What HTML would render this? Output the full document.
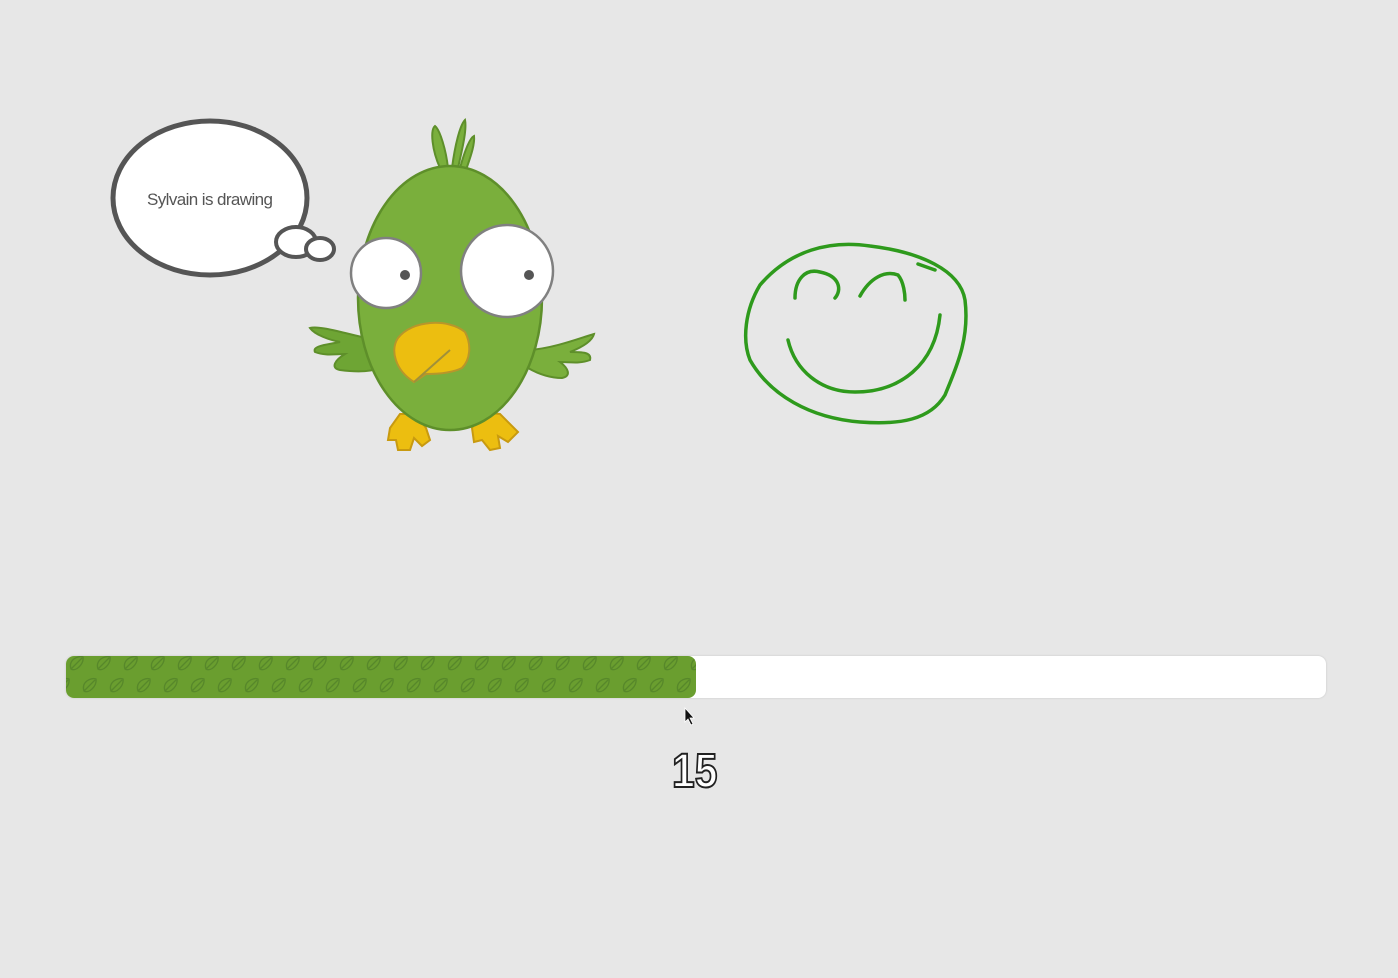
<!DOCTYPE html>
<html><head><style>
body{margin:0;width:1398px;height:978px;background:#e7e7e7;overflow:hidden;position:relative;font-family:"Liberation Sans",sans-serif}
.bar{position:absolute;left:66px;top:656px;width:1260px;height:42px;background:#fff;border-radius:8px;box-shadow:0 0 2px rgba(0,0,0,.15)}
.fill{position:absolute;left:66px;top:656px;width:630px;height:42px;border-radius:8px;background:#6a9e2f;overflow:hidden}
.num{position:absolute;left:672px;top:744px;font-size:48px;font-weight:bold;color:#fff;-webkit-text-stroke:2px #222;letter-spacing:0px;font-family:"Liberation Sans",sans-serif;transform:scaleX(0.85);transform-origin:left}
</style></head><body>
<svg width="1398" height="978" style="position:absolute;left:0;top:0">
<defs>
<pattern id="lf" x="0" y="0" width="54" height="42" patternUnits="userSpaceOnUse">
<g fill="none" stroke="#57882a" stroke-width="1.4">
<path d="M5 13 C2 4 12 -1 17 1 C18 8 10 16 5 13Z M5 13 L16 2"/>
<path d="M32 13 C29 4 39 -1 44 1 C45 8 37 16 32 13Z M32 13 L43 2"/>
<path d="M18 35 C15 26 25 21 30 23 C31 30 23 38 18 35Z M18 35 L29 24"/>
<path d="M45 35 C42 26 52 21 57 23 C58 30 50 38 45 35Z M45 35 L56 24"/>
<path d="M-9 35 C-12 26 -2 21 3 23 C4 30 -4 38 -9 35Z M-9 35 L2 24"/>
</g></pattern></defs>
<ellipse cx="210" cy="198" rx="97" ry="77" fill="#fff" stroke="#555" stroke-width="5"/>
<ellipse cx="296" cy="242" rx="20" ry="15" fill="#fff" stroke="#555" stroke-width="4"/>
<ellipse cx="320" cy="249" rx="14" ry="11" fill="#fff" stroke="#555" stroke-width="4"/>
<text x="210" y="205" text-anchor="middle" font-size="17" fill="#555" font-family="Liberation Sans Narrow, Liberation Sans" textLength="126">Sylvain is drawing</text>
<g fill="#7aaf3c" stroke="#5e8f2a" stroke-width="2">
<path d="M440 168 C432 150 430 130 435 126 C440 130 446 150 448 168Z"/>
<path d="M452 168 C455 145 460 125 465 120 C467 130 462 150 458 168Z"/>
<path d="M460 168 C465 150 470 138 474 136 C475 145 470 158 466 170Z"/>
</g>
<path d="M375 340 C350 335 320 325 310 328 C315 335 330 340 340 342 C325 345 312 346 315 352 C325 356 335 354 345 354 C335 360 330 368 340 370 C355 372 370 372 380 368Z" fill="#6ea534" stroke="#5e8f2a" stroke-width="2"/>
<path d="M530 350 C555 348 580 338 594 334 C592 342 580 348 570 352 C582 352 592 352 590 360 C580 364 570 362 560 362 C568 368 572 376 562 378 C548 378 535 372 528 368Z" fill="#7aaf3c" stroke="#5e8f2a" stroke-width="2"/>
<g fill="#ecbe10" stroke="#c89a10" stroke-width="2">
<path d="M400 414 L390 428 L388 440 L396 440 L398 450 L410 450 L414 438 L422 446 L430 440 L426 428 L416 414Z"/>
<path d="M480 412 L472 428 L474 442 L482 440 L490 450 L500 448 L498 436 L508 442 L518 432 L500 414Z"/>
</g>
<ellipse cx="450" cy="298" rx="92" ry="132" fill="#7aaf3c" stroke="#5e8f2a" stroke-width="2.5"/>
<circle cx="386" cy="273" r="35" fill="#fff" stroke="#808080" stroke-width="2.5"/>
<circle cx="507" cy="271" r="46" fill="#fff" stroke="#808080" stroke-width="2.5"/>
<circle cx="405" cy="275" r="5" fill="#555"/>
<circle cx="529" cy="275" r="5" fill="#555"/>
<path d="M414 382 C395 370 390 350 398 338 C412 320 448 318 465 332 C472 345 470 360 462 368 C450 374 430 374 426 374Z" fill="#ecbe10" stroke="#b8962a" stroke-width="2"/>
<path d="M414 382 L450 350" stroke="#a0903a" stroke-width="2"/>
<g fill="none" stroke="#2e9a1c" stroke-width="3.5" stroke-linecap="round">
<path d="M760 285 C790 250 830 240 870 246 C920 252 960 270 965 300 C970 340 955 370 945 395 C930 420 900 425 860 422 C810 418 770 395 750 360 C742 340 745 310 760 285Z"/>
<path d="M795 298 C795 280 805 268 820 272 C840 276 842 290 835 298"/>
<path d="M860 296 C870 278 885 270 898 275 C904 282 905 295 905 300"/>
<path d="M918 264 L935 270"/>
<path d="M788 340 C795 370 820 392 855 392 C900 392 935 365 940 315"/>
</g>
<path d="M685 708 L685 722 L688 719 L691 725 L693 724 L690 718 L694 718Z" fill="#111" stroke="#fff" stroke-width="0.8"/>
</svg>
<div class="bar"></div>
<div class="fill"><svg width="630" height="42" style="position:absolute;left:0;top:0"><rect x="0" y="0" width="630" height="42" fill="url(#lf)"/></svg></div>
<div class="num">15</div>
</body></html>
